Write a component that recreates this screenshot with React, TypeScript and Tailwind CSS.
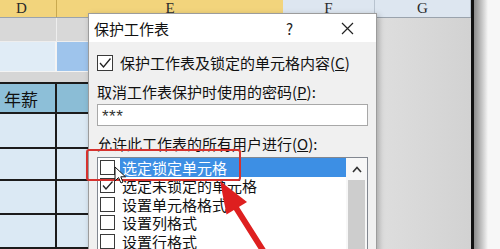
import React from "react";

const cjk = "font-['Noto_Sans_CJK_SC',sans-serif]";

function Box({ checked }: { checked?: boolean }) {
  return (
    <div className="w-[15px] h-[15px] shrink-0 border border-[#3a3a3a] bg-white flex items-center justify-center">
      {checked && (
        <svg width="13" height="13" viewBox="0 0 13 13">
          <path d="M2 6.5 L5 10 L11.5 2.5" fill="none" stroke="#222" strokeWidth="1.3" />
        </svg>
      )}
    </div>
  );
}

const items = [
  { label: "选定锁定单元格", checked: false, active: true },
  { label: "选定未锁定的单元格", checked: true },
  { label: "设置单元格格式", checked: false },
  { label: "设置列格式", checked: false },
  { label: "设置行格式", checked: false },
  { label: "", checked: false },
];

function Sheet() {
  return (
    <div className="flex flex-col w-[471px] h-full">
      {/* column headers */}
      <div className="flex h-[18px] border-b border-[#9aa3ad] font-['Liberation_Serif',serif] text-[15px] leading-none text-[#2a2a2a]">
        <div className="w-[57px] bg-[#f2d47c] border-r border-[#c9a94f] flex items-center pl-[16px]">D</div>
        <div className="w-[226px] bg-[#f2d47c] flex items-center justify-center">E</div>
        <div className="w-[92px] bg-[#dde6f0] border-r border-[#b8c3cf] flex items-center justify-center">F</div>
        <div className="flex-1 bg-[#dde6f0] border-r border-[#b8c3cf] flex items-center justify-center">G</div>
      </div>
      <div className="flex flex-1">
        <div className="w-[377px] flex flex-col">
          <div className="flex h-[24px] bg-[#d8d8d8] border-b border-[#eeeeee]">
            <div className="w-[57px] border-r border-[#eeeeee]" />
          </div>
          <div className="flex h-[30px] border-b border-[#f4f4f4]">
            <div className="w-[57px] bg-[#e0ecf6] border-r-2 border-[#f4f4f4]" />
            <div className="flex-1 bg-[#9ec4ec]" />
          </div>
          <div className="h-[10px] bg-[#d6d6d6]" />
          <div className="flex h-[32px] border-y-2 border-[#1b1b1b]">
            <div className={`w-[57px] bg-[#8dbfd8] border-r-2 border-[#1b1b1b] flex items-center pl-[4px] text-[17px] leading-none text-[#111] ${cjk}`}>
              年薪
            </div>
            <div className="flex-1 bg-[#8bbdd6]" />
          </div>
          {[35, 32, 34, 34].map((h, i) => (
            <div key={i} className="flex border-b-2 border-[#1b1b1b]" style={{ height: h }}>
              <div className="w-[57px] bg-[#dbe9f4] border-r-2 border-[#1b1b1b]" />
              <div className="flex-1 bg-[#dbe9f4]" />
            </div>
          ))}
        </div>
        <div className="flex-1 bg-gradient-to-r from-[#dedede] to-[#d2d2d2]" />
      </div>
    </div>
  );
}

function Dialog() {
  return (
    <div className={`absolute left-[88px] top-[13px] w-[289px] h-[250px] border border-[#9c9c9c] bg-[#f0f0f0] shadow-[2px_2px_6px_rgba(0,0,0,0.25)] ${cjk} text-[15px] leading-none text-[#111]`}>
      <div className="h-[28px] bg-white flex items-center pl-[5px]">
        <span>保护工作表</span>
        <span className="ml-auto text-[15px] text-[#222]">?</span>
        <svg className="ml-[48px] mr-[22px]" width="13" height="13" viewBox="0 0 13 13">
          <path d="M1 1 L12 12 M12 1 L1 12" stroke="#222" strokeWidth="1.2" />
        </svg>
      </div>
      <div className="pl-[8px] flex flex-col">
        <div className="h-[41px] flex items-center gap-[7px]">
          <div className="w-[16px] h-[16px] border border-[#3a3a3a] bg-white flex items-center justify-center">
            <svg width="14" height="14" viewBox="0 0 14 14">
              <path d="M2 7 L5.5 11 L12.5 2.5" fill="none" stroke="#222" strokeWidth="1.3" />
            </svg>
          </div>
          <span>
            保护工作表及锁定的单元格内容(<span className="underline">C</span>)
          </span>
        </div>
        <div className="h-[16px] flex items-center">
          取消工作表保护时使用的密码(<span className="underline">P</span>):
        </div>
        <div className="mt-[5px] w-[271px] h-[22px] border border-[#a8a8a8] bg-white flex items-center pl-[4px] pt-[3px] text-[17px] font-['Liberation_Sans',sans-serif] tracking-[0.5px] text-[#333]">
          ***
        </div>
        <div className="mt-[9px] h-[16px] flex items-center">
          允许此工作表的所有用户进行(<span className="underline">O</span>):
        </div>
        <div className="mt-[6px] w-[271px] h-[120px] border border-[#828790] bg-white flex">
          <div className="flex-1 flex flex-col">
            {items.map((it, i) => (
              <div key={i} className="h-[18.5px] flex items-center pl-[2px] shrink-0">
                <Box checked={it.checked} />
                {it.label && (
                  <div
                    className={`ml-[5px] flex-1 h-full flex items-center pl-[2px] ${
                      it.active ? "bg-[#3d8fe4] text-white" : ""
                    }`}
                  >
                    {it.label}
                  </div>
                )}
              </div>
            ))}
          </div>
          <div className="w-[21px] bg-[#f7f7f7] flex flex-col items-center">
            <div className="h-[22px] flex items-center justify-center">
              <svg width="10" height="7" viewBox="0 0 10 7">
                <path d="M1 6 L5 1.5 L9 6" fill="none" stroke="#333" strokeWidth="1.6" />
              </svg>
            </div>
            <div className="w-[17px] flex-1 bg-[#cdcdcd]" />
          </div>
        </div>
      </div>
    </div>
  );
}

export default function App() {
  return (
    <div className="relative w-[500px] h-[249px] overflow-hidden bg-[#f7f7f7] flex">
      <Sheet />
      <div className="w-[3px] h-full bg-[#111]" />
      <div className="w-[14px] h-full bg-gradient-to-r from-[#8a8a8a] to-[#f7f7f7]" />
      <Dialog />
      {/* highlight frame */}
      <div className="absolute left-[86px] top-[149px] w-[155px] h-[32px] border-2 border-[#d6322e] rounded-[3px]" />
      {/* mouse pointer */}
      <svg className="absolute left-[114px] top-[166px]" width="14" height="18" viewBox="0 0 14 18">
        <path d="M1 1 L1 15 L4.5 11.5 L7 17 L9 16 L6.8 10.8 L11.5 10.8 Z" fill="white" stroke="#111" strokeWidth="1" />
      </svg>
      {/* red arrow */}
      <svg className="absolute left-0 top-0" width="500" height="249" viewBox="0 0 500 249">
        <path d="M264 252 L233 203" stroke="#de1f1f" strokeWidth="6" strokeLinecap="round" />
        <path d="M220 181 L247 202 L226.5 214.5 Z" fill="#de1f1f" />
      </svg>
    </div>
  );
}
